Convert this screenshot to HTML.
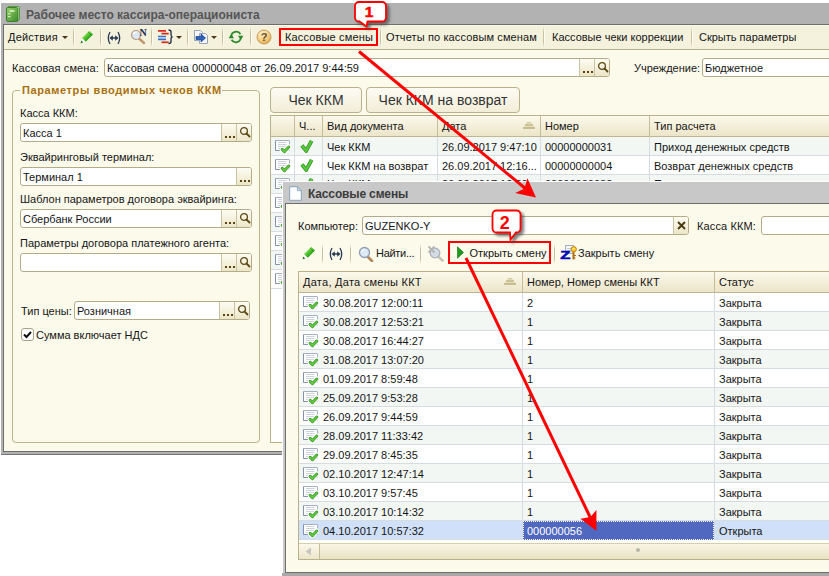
<!DOCTYPE html>
<html><head><meta charset="utf-8">
<style>
*{box-sizing:border-box;margin:0;padding:0}
html,body{width:829px;height:576px;overflow:hidden;background:#fff}
body{position:relative;font-family:"Liberation Sans",sans-serif;font-size:11px;color:#151515}
.abs{position:absolute}
.t{position:absolute;white-space:nowrap;line-height:14px;height:14px}
.win{position:absolute;background:#fcfaeb}
.inp{position:absolute;background:#fff;border:1px solid #b3ac86;border-radius:3px;height:19px}
.inp .v{position:absolute;left:2px;top:2px;line-height:14px;white-space:nowrap}
.btns{position:absolute;right:0;top:0;bottom:0;display:flex}
.sb{width:15px;height:17px;border-left:1px solid #c9c3a0;background:linear-gradient(#fdfcf3,#ece6c8);position:relative}
.sb:last-child{border-radius:0 2px 2px 0}
.dots{position:absolute;left:3px;top:12px;width:10px;height:2px;background:linear-gradient(90deg,#5a4510 0 2px,transparent 2px 4px,#5a4510 4px 6px,transparent 6px 8px,#5a4510 8px 10px)}
.sep{position:absolute;width:2px;background:linear-gradient(90deg,#c9c19a 0 1px,#fffef6 1px 2px);-webkit-mask-image:linear-gradient(transparent,#000 25%,#000 75%,transparent);mask-image:linear-gradient(transparent,#000 25%,#000 75%,transparent)}
.hdr{position:absolute;background:linear-gradient(#fbf9ec,#f4efda 50%,#ece5c9);border-right:1px solid #c5bd97;border-bottom:1px solid #bfb791;height:21px}
.hdr span{position:absolute;left:4px;top:3px;line-height:14px;white-space:nowrap}
.cell{position:absolute;white-space:nowrap;line-height:14px}

.bigbtn{border:1px solid #b9b18a;border-radius:4px;background:linear-gradient(#fdfcf4,#f2edd7);text-align:center}
.bigbtn span{font-size:14px;line-height:24px;color:#333}
.sort{position:absolute;top:6px;width:12px;height:8px;background:linear-gradient(#d2c9a0,#d2c9a0) 4px 0/4px 1px no-repeat,linear-gradient(#ccc296,#ccc296) 2px 2px/8px 2px no-repeat,linear-gradient(#c8bd8e,#c8bd8e) 0 5px/12px 2px no-repeat,linear-gradient(#e4ddbc,#e4ddbc) 3px 1px/6px 1px no-repeat,linear-gradient(#e4ddbc,#e4ddbc) 1px 4px/10px 1px no-repeat}
</style></head><body>

<!-- MAIN WINDOW -->
<div class="abs" style="left:1px;top:3px;width:840px;height:452px;background:#757575"></div><div class="abs" style="left:1px;top:3px;width:840px;height:451px;background:#b2b2b2"></div>
<div class="abs" style="left:3px;top:3px;width:840px;height:449px;background:#6e6e6e"></div>
<div class="win" id="w1" style="left:4px;top:25px;width:840px;height:426px"></div>
<div class="abs" style="left:3px;top:3px;width:830px;height:21px;background:#b2b2b2"></div>
<div class="t" style="left:26px;top:8px;font-weight:bold;font-size:12px;color:#555" id="title1">Рабочее место кассира-операциониста</div>
<!-- toolbar -->
<div class="abs" style="left:4px;top:25px;width:830px;height:24px;background:#f4f1dc;border-top:1px solid #faf8e8"></div>
<div class="abs" style="left:4px;top:49px;width:830px;height:1px;background:#b9b18a"></div>
<div class="t" style="left:8px;top:30px;letter-spacing:.2px" id="act">Действия</div>
<div class="t" style="left:285px;top:30px;letter-spacing:.15px" id="m1">Кассовые смены</div>
<div class="t" style="left:386px;top:30px;letter-spacing:.12px" id="m2">Отчеты по кассовым сменам</div>
<div class="t" style="left:552px;top:30px" id="m3">Кассовые чеки коррекции</div>
<div class="t" style="left:699px;top:30px" id="m4">Скрыть параметры</div>


<!-- toolbar1 icons -->
<svg class="abs" style="left:5px;top:6px" width="16" height="17" viewBox="0 0 16 17"><defs><linearGradient id="bk" x1="0" y1="0" x2="1" y2="1"><stop offset="0" stop-color="#9cd470"/><stop offset="1" stop-color="#3a8a26"/></linearGradient></defs><rect x="2.500" y="0.500" width="12" height="14" rx="1.500" fill="#d8ecc8" stroke="#5a9a44"/><rect x="1.500" y="1.500" width="11.500" height="14" rx="1.500" fill="url(#bk)" stroke="#3c8030"/><path d="M4.500 5h5" stroke="#eafbe0" stroke-width="1.400"/><path d="M3.200 7.800h2.300M3.200 10.600h2.300" stroke="#eafbe0" stroke-width="1"/></svg>
<svg class="abs" style="left:62px;top:36px" width="6" height="3"><path d="M0 0h6l-3 3z" fill="#4a3a1a"/></svg>
<div class="sep" style="left:73px;top:27px;height:20px"></div>
<svg class="abs" style="left:80px;top:30px" width="14" height="14" viewBox="0 0 14 14"><defs><linearGradient id="pg" x1="0" y1="0" x2="1" y2="1"><stop offset="0" stop-color="#1e7a10"/><stop offset=".3" stop-color="#86e058"/><stop offset=".55" stop-color="#3cb422"/><stop offset="1" stop-color="#1c7a0e"/></linearGradient></defs><path d="M0.600 13.200l1.400-5.200l3.800 3.800z" fill="#fff"/><path d="M0.600 13.200l0.700-2.600l1.900 1.900z" fill="#1e6a12"/><path d="M2 8l7.200-7.200l3.800 3.800l-7.200 7.200z" fill="url(#pg)"/><path d="M8 2l3.800 3.800" stroke="#1e7a10" stroke-width=".7" opacity=".7"/></svg>
<div class="sep" style="left:100px;top:27px;height:20px"></div>
<svg class="abs" style="left:106px;top:31px" width="16" height="14" viewBox="0 0 16 14"><path d="M4 1q-3.400 6 0 12M12 1q3.400 6 0 12" fill="none" stroke="#2a3c54" stroke-width="1.300"/><path d="M5 7h6" stroke="#2a3c54" stroke-width="1.500"/><path d="M6.800 4.200L3.400 7l3.400 2.800zM9.200 4.200L12.600 7l-3.400 2.800z" fill="#2a3c54"/></svg>
<svg class="abs" style="left:130px;top:28px" width="18" height="17" viewBox="0 0 18 17"><path d="M9 10.500l5 4.500" stroke="#c09870" stroke-width="2.400" stroke-linecap="round"/><circle cx="6" cy="7" r="4.500" fill="#dde8f6" stroke="#b89878" stroke-width="1.200"/><path d="M3.500 6a3 3 0 0 1 3-2" fill="none" stroke="#fff" stroke-width="1.200"/><text x="9.500" y="8" font-family="Liberation Serif,serif" font-weight="bold" font-size="10" fill="#1c2a50">N</text></svg>
<div class="sep" style="left:151px;top:27px;height:20px"></div>
<svg class="abs" style="left:157px;top:29px" width="17" height="16" viewBox="0 0 17 16"><path d="M1 1.800h8M4.500 4.700h7.200" stroke="#e02818" stroke-width="1.700"/><path d="M1 7.500h8M1 10.300h8" stroke="#2f72d0" stroke-width="1.700"/><path d="M4.500 13.300h7.200" stroke="#e02818" stroke-width="1.700"/><path d="M11.500 1q2.500 0 2.500 2v3q0 1.500 1.500 1.800q-1.500 0.300-1.500 1.800v3q0 2-2.500 2" fill="none" stroke="#1c2a44" stroke-width="1.300"/></svg>
<svg class="abs" style="left:176px;top:36px" width="6" height="3"><path d="M0 0h6l-3 3z" fill="#4a3a1a"/></svg>
<div class="sep" style="left:187px;top:27px;height:20px"></div>
<svg class="abs" style="left:193px;top:29px" width="16" height="16" viewBox="0 0 16 16"><path d="M1.500 1.500h6l2 2v8h-8z" fill="#f4f6fa" stroke="#9aa6b8"/><path d="M6.500 4.500h6l2 2v8h-8z" fill="#f4f6fa" stroke="#9aa6b8"/><path d="M3 7.500h5v-2.500l4.500 4l-4.500 4v-2.500h-5z" fill="#2a62bc" stroke="#173f86" stroke-width=".7"/></svg>
<svg class="abs" style="left:211px;top:36px" width="6" height="3"><path d="M0 0h6l-3 3z" fill="#4a3a1a"/></svg>
<div class="sep" style="left:222px;top:27px;height:20px"></div>
<svg class="abs" style="left:228px;top:29px" width="16" height="16" viewBox="0 0 16 16"><path d="M3.200 7.500a5 5 0 0 1 9.300-2.300" fill="none" stroke="#2a8a2a" stroke-width="1.700"/><path d="M0.600 9.200h5.400l-2.700-4.200z" fill="#2a8a2a"/><path d="M12.800 8.500a5 5 0 0 1-9.300 2.300" fill="none" stroke="#2a8a2a" stroke-width="1.700"/><path d="M10 6.800h5.400l-2.700 4.200z" fill="#2a8a2a"/></svg>
<div class="sep" style="left:250px;top:27px;height:20px"></div>
<svg class="abs" style="left:256px;top:29px" width="16" height="16" viewBox="0 0 16 16"><defs><radialGradient id="hg" cx=".4" cy=".3" r=".8"><stop offset="0" stop-color="#fff6dc"/><stop offset=".6" stop-color="#f3c878"/><stop offset="1" stop-color="#d89a40"/></radialGradient></defs><circle cx="8" cy="8" r="7" fill="url(#hg)" stroke="#c9a060" stroke-width="1"/><text x="8" y="12" text-anchor="middle" font-family="Liberation Sans,sans-serif" font-weight="bold" font-size="11" fill="#6a4a20">?</text></svg>
<div class="sep" style="left:380px;top:27px;height:20px"></div>
<div class="sep" style="left:543px;top:27px;height:20px"></div>
<div class="sep" style="left:691px;top:27px;height:20px"></div>
<div class="t" style="left:12px;top:61px;letter-spacing:.13px" id="l1">Кассовая смена:</div>
<div class="inp" style="left:104px;top:58px;width:506px"><span class="v">Кассовая смена 000000048 от 26.09.2017 9:44:59</span><div class="btns"><div class="sb"><i class="dots"></i></div><div class="sb"><svg class="abs" style="left:2px;top:2px" width="12" height="13" viewBox="0 0 12 13"><circle cx="5" cy="5" r="3.400" fill="none" stroke="#5c4a14" stroke-width="1.300"/><path d="M7.500 7.500l3 3" stroke="#5c4a14" stroke-width="1.800" stroke-linecap="round"/></svg></div></div></div>
<div class="t" style="left:634px;top:61px" id="l2">Учреждение:</div>
<div class="inp" style="left:702px;top:58px;width:140px"><span class="v">Бюджетное</span></div>

<!-- group -->
<div class="abs" style="left:12px;top:90px;width:248px;height:353px;border:1px solid #bdb48a;border-radius:4px"></div>
<div class="t" style="left:20px;top:83px;font-weight:bold;color:#a8700f;background:#fcfaeb;padding:0 0 0 2px;letter-spacing:.6px" id="gt">Параметры вводимых чеков ККМ</div>

<div class="t" style="left:20px;top:106px">Касса ККМ:</div>
<div class="inp" style="left:20px;top:123px;width:232px"><span class="v">Касса 1</span><div class="btns"><div class="sb"><i class="dots"></i></div><div class="sb"><svg class="abs" style="left:2px;top:2px" width="12" height="13" viewBox="0 0 12 13"><circle cx="5" cy="5" r="3.400" fill="none" stroke="#5c4a14" stroke-width="1.300"/><path d="M7.500 7.500l3 3" stroke="#5c4a14" stroke-width="1.800" stroke-linecap="round"/></svg></div></div></div>
<div class="t" style="left:20px;top:150px">Эквайринговый терминал:</div>
<div class="inp" style="left:20px;top:167px;width:232px"><span class="v">Терминал 1</span><div class="btns"><div class="sb"><i class="dots"></i></div></div></div>
<div class="t" style="left:20px;top:192px">Шаблон параметров договора эквайринга:</div>
<div class="inp" style="left:20px;top:209px;width:232px"><span class="v">Сбербанк России</span><div class="btns"><div class="sb"><i class="dots"></i></div><div class="sb"><svg class="abs" style="left:2px;top:2px" width="12" height="13" viewBox="0 0 12 13"><circle cx="5" cy="5" r="3.400" fill="none" stroke="#5c4a14" stroke-width="1.300"/><path d="M7.500 7.500l3 3" stroke="#5c4a14" stroke-width="1.800" stroke-linecap="round"/></svg></div></div></div>
<div class="t" style="left:20px;top:236px">Параметры договора платежного агента:</div>
<div class="inp" style="left:20px;top:253px;width:232px"><div class="btns"><div class="sb"><i class="dots"></i></div><div class="sb"><svg class="abs" style="left:2px;top:2px" width="12" height="13" viewBox="0 0 12 13"><circle cx="5" cy="5" r="3.400" fill="none" stroke="#5c4a14" stroke-width="1.300"/><path d="M7.500 7.500l3 3" stroke="#5c4a14" stroke-width="1.800" stroke-linecap="round"/></svg></div></div></div>
<div class="t" style="left:21px;top:304px">Тип цены:</div>
<div class="inp" style="left:74px;top:301px;width:176px"><span class="v">Розничная</span><div class="btns"><div class="sb"><i class="dots"></i></div><div class="sb"><svg class="abs" style="left:2px;top:2px" width="12" height="13" viewBox="0 0 12 13"><circle cx="5" cy="5" r="3.400" fill="none" stroke="#5c4a14" stroke-width="1.300"/><path d="M7.500 7.500l3 3" stroke="#5c4a14" stroke-width="1.800" stroke-linecap="round"/></svg></div></div></div>
<div class="abs" style="left:21px;top:328px;width:13px;height:13px;border:1px solid #a9a38a;border-radius:3px;background:#fff"></div><svg class="abs" style="left:23px;top:331px" width="9" height="8" viewBox="0 0 9 8"><path d="M1 3.500l2.500 2.500l4.500-5" fill="none" stroke="#111" stroke-width="2"/></svg>
<div class="t" style="left:36px;top:328px">Сумма включает НДС</div>



<!-- main buttons -->
<div class="abs bigbtn" style="left:270px;top:87px;width:92px;height:26px"><span>Чек ККМ</span></div>
<div class="abs bigbtn" style="left:366px;top:87px;width:154px;height:26px"><span>Чек ККМ на возврат</span></div>

<!-- main table -->
<div class="abs" style="left:270px;top:115px;width:570px;height:328px;background:#fff;border:1px solid #b9b18a"></div>
<div class="hdr" style="left:271px;top:116px;width:24px"></div>
<div class="hdr" style="left:295px;top:116px;width:28px"><span style="left:4px">Ч...</span></div>
<div class="hdr" style="left:323px;top:116px;width:115px"><span>Вид документа</span></div>
<div class="hdr" style="left:438px;top:116px;width:103px"><span>Дата</span><i class="sort" style="left:85px"></i></div>
<div class="hdr" style="left:541px;top:116px;width:109px"><span>Номер</span></div>
<div class="hdr" style="left:650px;top:116px;width:190px"><span>Тип расчета</span></div>
<div class="abs" style="left:271px;top:137px;width:570px;height:19px;background:#f2f7f4;border-bottom:1px solid #d5dde3"></div>
<div class="abs" style="left:294px;top:137px;width:1px;height:19px;background:#d5dde3"></div>
<div class="abs" style="left:322px;top:137px;width:1px;height:19px;background:#d5dde3"></div>
<div class="abs" style="left:437px;top:137px;width:1px;height:19px;background:#d5dde3"></div>
<div class="abs" style="left:540px;top:137px;width:1px;height:19px;background:#d5dde3"></div>
<div class="abs" style="left:649px;top:137px;width:1px;height:19px;background:#d5dde3"></div>
<svg class="abs" style="left:275px;top:140px" width="16" height="14" viewBox="0 0 16 14"><rect x="0.500" y="0.500" width="14" height="10" rx="0.500" fill="#fff" stroke="#a4b0c2"/><path d="M0.500 10.500v-10M0.500 10.500h7" stroke="#8392a8" fill="none"/><path d="M3 2.500h8.500M3 4.500h8.500M3 6.500h8M3 8.500h4" stroke="#ccd3de"/><path d="M7.200 9.400l2.300 2.200l4.300-4.600" fill="none" stroke="#fff" stroke-width="5" stroke-linecap="round" stroke-linejoin="round"/><path d="M7.200 9.400l2.300 2.200l4.300-4.600" fill="none" stroke="#3a9a24" stroke-width="3" stroke-linecap="round" stroke-linejoin="round"/><path d="M7.200 9.400l2.300 2.200l4.300-4.600" fill="none" stroke="#62c844" stroke-width="1.600" stroke-linecap="round" stroke-linejoin="round"/></svg><svg class="abs" style="left:300px;top:139px" width="14" height="14" viewBox="0 0 14 14"><path d="M1.800 6.500L6.200 11.800L11.600 1.800" fill="none" stroke="#2f8f1e" stroke-width="3.800" stroke-linejoin="miter"/><path d="M1.800 6.500L6.200 11.800L11.600 1.800" fill="none" stroke="#56c63c" stroke-width="2.400" stroke-linejoin="miter"/></svg><div class="cell" style="left:327px;top:140px">Чек ККМ</div><div class="cell" style="left:442px;top:140px">26.09.2017 9:47:10</div><div class="cell" style="left:545px;top:140px">00000000031</div><div class="cell" style="left:654px;top:140px">Приход денежных средств</div>
<div class="abs" style="left:271px;top:156px;width:570px;height:19px;background:#fff;border-bottom:1px solid #d5dde3"></div>
<div class="abs" style="left:294px;top:156px;width:1px;height:19px;background:#d5dde3"></div>
<div class="abs" style="left:322px;top:156px;width:1px;height:19px;background:#d5dde3"></div>
<div class="abs" style="left:437px;top:156px;width:1px;height:19px;background:#d5dde3"></div>
<div class="abs" style="left:540px;top:156px;width:1px;height:19px;background:#d5dde3"></div>
<div class="abs" style="left:649px;top:156px;width:1px;height:19px;background:#d5dde3"></div>
<svg class="abs" style="left:275px;top:159px" width="16" height="14" viewBox="0 0 16 14"><rect x="0.500" y="0.500" width="14" height="10" rx="0.500" fill="#fff" stroke="#a4b0c2"/><path d="M0.500 10.500v-10M0.500 10.500h7" stroke="#8392a8" fill="none"/><path d="M3 2.500h8.500M3 4.500h8.500M3 6.500h8M3 8.500h4" stroke="#ccd3de"/><path d="M7.200 9.400l2.300 2.200l4.300-4.600" fill="none" stroke="#fff" stroke-width="5" stroke-linecap="round" stroke-linejoin="round"/><path d="M7.200 9.400l2.300 2.200l4.300-4.600" fill="none" stroke="#3a9a24" stroke-width="3" stroke-linecap="round" stroke-linejoin="round"/><path d="M7.200 9.400l2.300 2.200l4.300-4.600" fill="none" stroke="#62c844" stroke-width="1.600" stroke-linecap="round" stroke-linejoin="round"/></svg><svg class="abs" style="left:300px;top:158px" width="14" height="14" viewBox="0 0 14 14"><path d="M1.800 6.500L6.200 11.800L11.600 1.800" fill="none" stroke="#2f8f1e" stroke-width="3.800" stroke-linejoin="miter"/><path d="M1.800 6.500L6.200 11.800L11.600 1.800" fill="none" stroke="#56c63c" stroke-width="2.400" stroke-linejoin="miter"/></svg><div class="cell" style="left:327px;top:159px">Чек ККМ на возврат</div><div class="cell" style="left:442px;top:159px">26.09.2017 12:16...</div><div class="cell" style="left:545px;top:159px">00000000004</div><div class="cell" style="left:654px;top:159px">Возврат денежных средств</div>
<div class="abs" style="left:271px;top:175px;width:570px;height:19px;background:#f2f7f4;border-bottom:1px solid #d5dde3"></div>
<div class="abs" style="left:294px;top:175px;width:1px;height:19px;background:#d5dde3"></div>
<div class="abs" style="left:322px;top:175px;width:1px;height:19px;background:#d5dde3"></div>
<div class="abs" style="left:437px;top:175px;width:1px;height:19px;background:#d5dde3"></div>
<div class="abs" style="left:540px;top:175px;width:1px;height:19px;background:#d5dde3"></div>
<div class="abs" style="left:649px;top:175px;width:1px;height:19px;background:#d5dde3"></div>
<svg class="abs" style="left:275px;top:178px" width="16" height="14" viewBox="0 0 16 14"><rect x="0.500" y="0.500" width="14" height="10" rx="0.500" fill="#fff" stroke="#a4b0c2"/><path d="M0.500 10.500v-10M0.500 10.500h7" stroke="#8392a8" fill="none"/><path d="M3 2.500h8.500M3 4.500h8.500M3 6.500h8M3 8.500h4" stroke="#ccd3de"/><path d="M7.200 9.400l2.300 2.200l4.300-4.600" fill="none" stroke="#fff" stroke-width="5" stroke-linecap="round" stroke-linejoin="round"/><path d="M7.200 9.400l2.300 2.200l4.300-4.600" fill="none" stroke="#3a9a24" stroke-width="3" stroke-linecap="round" stroke-linejoin="round"/><path d="M7.200 9.400l2.300 2.200l4.300-4.600" fill="none" stroke="#62c844" stroke-width="1.600" stroke-linecap="round" stroke-linejoin="round"/></svg><svg class="abs" style="left:300px;top:177px" width="14" height="14" viewBox="0 0 14 14"><path d="M1.800 6.500L6.200 11.800L11.600 1.800" fill="none" stroke="#2f8f1e" stroke-width="3.800" stroke-linejoin="miter"/><path d="M1.800 6.500L6.200 11.800L11.600 1.800" fill="none" stroke="#56c63c" stroke-width="2.400" stroke-linejoin="miter"/></svg><div class="cell" style="left:327px;top:177px">Чек ККМ</div><div class="cell" style="left:442px;top:177px">26.09.2017 12:20...</div><div class="cell" style="left:545px;top:177px">00000000032</div><div class="cell" style="left:654px;top:177px">Приход денежных средств</div>
<div class="abs" style="left:271px;top:194px;width:570px;height:19px;background:#fff;border-bottom:1px solid #d5dde3"></div>
<div class="abs" style="left:294px;top:194px;width:1px;height:19px;background:#d5dde3"></div>
<div class="abs" style="left:322px;top:194px;width:1px;height:19px;background:#d5dde3"></div>
<div class="abs" style="left:437px;top:194px;width:1px;height:19px;background:#d5dde3"></div>
<div class="abs" style="left:540px;top:194px;width:1px;height:19px;background:#d5dde3"></div>
<div class="abs" style="left:649px;top:194px;width:1px;height:19px;background:#d5dde3"></div>
<svg class="abs" style="left:275px;top:197px" width="16" height="14" viewBox="0 0 16 14"><rect x="0.500" y="0.500" width="14" height="10" rx="0.500" fill="#fff" stroke="#a4b0c2"/><path d="M0.500 10.500v-10M0.500 10.500h7" stroke="#8392a8" fill="none"/><path d="M3 2.500h8.500M3 4.500h8.500M3 6.500h8M3 8.500h4" stroke="#ccd3de"/><path d="M7.200 9.400l2.300 2.200l4.300-4.600" fill="none" stroke="#fff" stroke-width="5" stroke-linecap="round" stroke-linejoin="round"/><path d="M7.200 9.400l2.300 2.200l4.300-4.600" fill="none" stroke="#3a9a24" stroke-width="3" stroke-linecap="round" stroke-linejoin="round"/><path d="M7.200 9.400l2.300 2.200l4.300-4.600" fill="none" stroke="#62c844" stroke-width="1.600" stroke-linecap="round" stroke-linejoin="round"/></svg><div class="abs" style="left:271px;top:213px;width:570px;height:19px;background:#f2f7f4;border-bottom:1px solid #d5dde3"></div>
<div class="abs" style="left:294px;top:213px;width:1px;height:19px;background:#d5dde3"></div>
<div class="abs" style="left:322px;top:213px;width:1px;height:19px;background:#d5dde3"></div>
<div class="abs" style="left:437px;top:213px;width:1px;height:19px;background:#d5dde3"></div>
<div class="abs" style="left:540px;top:213px;width:1px;height:19px;background:#d5dde3"></div>
<div class="abs" style="left:649px;top:213px;width:1px;height:19px;background:#d5dde3"></div>
<svg class="abs" style="left:275px;top:216px" width="16" height="14" viewBox="0 0 16 14"><rect x="0.500" y="0.500" width="14" height="10" rx="0.500" fill="#fff" stroke="#a4b0c2"/><path d="M0.500 10.500v-10M0.500 10.500h7" stroke="#8392a8" fill="none"/><path d="M3 2.500h8.500M3 4.500h8.500M3 6.500h8M3 8.500h4" stroke="#ccd3de"/><path d="M7.200 9.400l2.300 2.200l4.300-4.600" fill="none" stroke="#fff" stroke-width="5" stroke-linecap="round" stroke-linejoin="round"/><path d="M7.200 9.400l2.300 2.200l4.300-4.600" fill="none" stroke="#3a9a24" stroke-width="3" stroke-linecap="round" stroke-linejoin="round"/><path d="M7.200 9.400l2.300 2.200l4.300-4.600" fill="none" stroke="#62c844" stroke-width="1.600" stroke-linecap="round" stroke-linejoin="round"/></svg><div class="abs" style="left:271px;top:232px;width:570px;height:19px;background:#fff;border-bottom:1px solid #d5dde3"></div>
<div class="abs" style="left:294px;top:232px;width:1px;height:19px;background:#d5dde3"></div>
<div class="abs" style="left:322px;top:232px;width:1px;height:19px;background:#d5dde3"></div>
<div class="abs" style="left:437px;top:232px;width:1px;height:19px;background:#d5dde3"></div>
<div class="abs" style="left:540px;top:232px;width:1px;height:19px;background:#d5dde3"></div>
<div class="abs" style="left:649px;top:232px;width:1px;height:19px;background:#d5dde3"></div>
<svg class="abs" style="left:275px;top:235px" width="16" height="14" viewBox="0 0 16 14"><rect x="0.500" y="0.500" width="14" height="10" rx="0.500" fill="#fff" stroke="#a4b0c2"/><path d="M0.500 10.500v-10M0.500 10.500h7" stroke="#8392a8" fill="none"/><path d="M3 2.500h8.500M3 4.500h8.500M3 6.500h8M3 8.500h4" stroke="#ccd3de"/><path d="M7.200 9.400l2.300 2.200l4.300-4.600" fill="none" stroke="#fff" stroke-width="5" stroke-linecap="round" stroke-linejoin="round"/><path d="M7.200 9.400l2.300 2.200l4.300-4.600" fill="none" stroke="#3a9a24" stroke-width="3" stroke-linecap="round" stroke-linejoin="round"/><path d="M7.200 9.400l2.300 2.200l4.300-4.600" fill="none" stroke="#62c844" stroke-width="1.600" stroke-linecap="round" stroke-linejoin="round"/></svg><div class="abs" style="left:271px;top:251px;width:570px;height:19px;background:#f2f7f4;border-bottom:1px solid #d5dde3"></div>
<div class="abs" style="left:294px;top:251px;width:1px;height:19px;background:#d5dde3"></div>
<div class="abs" style="left:322px;top:251px;width:1px;height:19px;background:#d5dde3"></div>
<div class="abs" style="left:437px;top:251px;width:1px;height:19px;background:#d5dde3"></div>
<div class="abs" style="left:540px;top:251px;width:1px;height:19px;background:#d5dde3"></div>
<div class="abs" style="left:649px;top:251px;width:1px;height:19px;background:#d5dde3"></div>
<svg class="abs" style="left:275px;top:254px" width="16" height="14" viewBox="0 0 16 14"><rect x="0.500" y="0.500" width="14" height="10" rx="0.500" fill="#fff" stroke="#a4b0c2"/><path d="M0.500 10.500v-10M0.500 10.500h7" stroke="#8392a8" fill="none"/><path d="M3 2.500h8.500M3 4.500h8.500M3 6.500h8M3 8.500h4" stroke="#ccd3de"/><path d="M7.200 9.400l2.300 2.200l4.300-4.600" fill="none" stroke="#fff" stroke-width="5" stroke-linecap="round" stroke-linejoin="round"/><path d="M7.200 9.400l2.300 2.200l4.300-4.600" fill="none" stroke="#3a9a24" stroke-width="3" stroke-linecap="round" stroke-linejoin="round"/><path d="M7.200 9.400l2.300 2.200l4.300-4.600" fill="none" stroke="#62c844" stroke-width="1.600" stroke-linecap="round" stroke-linejoin="round"/></svg><div class="abs" style="left:271px;top:270px;width:570px;height:19px;background:#fff;border-bottom:1px solid #d5dde3"></div>
<div class="abs" style="left:294px;top:270px;width:1px;height:19px;background:#d5dde3"></div>
<div class="abs" style="left:322px;top:270px;width:1px;height:19px;background:#d5dde3"></div>
<div class="abs" style="left:437px;top:270px;width:1px;height:19px;background:#d5dde3"></div>
<div class="abs" style="left:540px;top:270px;width:1px;height:19px;background:#d5dde3"></div>
<div class="abs" style="left:649px;top:270px;width:1px;height:19px;background:#d5dde3"></div>
<svg class="abs" style="left:275px;top:273px" width="16" height="14" viewBox="0 0 16 14"><rect x="0.500" y="0.500" width="14" height="10" rx="0.500" fill="#fff" stroke="#a4b0c2"/><path d="M0.500 10.500v-10M0.500 10.500h7" stroke="#8392a8" fill="none"/><path d="M3 2.500h8.500M3 4.500h8.500M3 6.500h8M3 8.500h4" stroke="#ccd3de"/><path d="M7.200 9.400l2.300 2.200l4.300-4.600" fill="none" stroke="#fff" stroke-width="5" stroke-linecap="round" stroke-linejoin="round"/><path d="M7.200 9.400l2.300 2.200l4.300-4.600" fill="none" stroke="#3a9a24" stroke-width="3" stroke-linecap="round" stroke-linejoin="round"/><path d="M7.200 9.400l2.300 2.200l4.300-4.600" fill="none" stroke="#62c844" stroke-width="1.600" stroke-linecap="round" stroke-linejoin="round"/></svg>
<!-- WINDOW 2 -->
<div class="abs" style="left:282px;top:181px;width:560px;height:395px;background:#fff"></div><div class="abs" style="left:283px;top:182px;width:560px;height:394px;background:#c8c8c8"></div>
<div class="abs" style="left:282px;top:573px;width:560px;height:3px;background:#a8a8a8"></div><div class="abs" style="left:285px;top:182px;width:560px;height:391px;background:#6e6e6e"></div>
<div class="abs" style="left:283px;top:182px;width:560px;height:21px;background:#c8c8c8"></div>
<div class="abs" style="left:286px;top:204px;width:560px;height:368px;background:#fcfaeb"></div>
<svg class="abs" style="left:289px;top:186px" width="13" height="15" viewBox="0 0 13 15"><path d="M0.700 0.700h7.600l4 4v9.600h-11.600z" fill="#fdfeff" stroke="#8ba3bc" stroke-width="1"/><path d="M8.300 0.700v4h4z" fill="#d0dcea" stroke="#8ba3bc" stroke-width=".8"/></svg>
<div class="t" style="left:308px;top:187px;font-weight:bold;font-size:12px;color:#3c3c3c;letter-spacing:-.15px" id="title2">Кассовые смены</div>

<div class="t" style="left:298px;top:219px" id="l3">Компьютер:</div>
<div class="inp" style="left:362px;top:216px;width:327px"><span class="v">GUZENKO-Y</span><div class="btns"><div class="sb"><svg class="abs" style="left:3px;top:4px" width="9" height="9" viewBox="0 0 9 9"><path d="M1 1l7 7M8 1l-7 7" stroke="#4a3a10" stroke-width="1.9"/></svg></div></div></div>
<div class="t" style="left:697px;top:219px;letter-spacing:.13px" id="l4">Касса ККМ:</div>
<div class="inp" style="left:761px;top:216px;width:90px"></div>

<!-- toolbar2 -->
<div class="sep" style="left:322px;top:244px;height:20px"></div>

<div class="sep" style="left:350px;top:244px;height:20px"></div>
<div class="t" style="left:376px;top:246px;letter-spacing:-.3px" id="find">Найти...</div>
<div class="sep" style="left:420px;top:244px;height:20px"></div>
<div class="t" style="left:469.500px;top:246px" id="open">Открыть смену</div>
<div class="sep" style="left:554px;top:244px;height:20px"></div>
<div class="t" style="left:578px;top:246px" id="close">Закрыть смену</div>


<svg class="abs" style="left:302px;top:246px" width="14" height="14" viewBox="0 0 14 14"><defs><linearGradient id="pg2" x1="0" y1="0" x2="1" y2="1"><stop offset="0" stop-color="#1e7a10"/><stop offset=".3" stop-color="#86e058"/><stop offset=".55" stop-color="#3cb422"/><stop offset="1" stop-color="#1c7a0e"/></linearGradient></defs><path d="M0.600 13.200l1.400-5.200l3.800 3.800z" fill="#fff"/><path d="M0.600 13.200l0.700-2.600l1.900 1.900z" fill="#1e6a12"/><path d="M2 8l7.200-7.200l3.800 3.800l-7.200 7.200z" fill="url(#pg2)"/><path d="M8 2l3.800 3.800" stroke="#1e7a10" stroke-width=".7" opacity=".7"/></svg>
<svg class="abs" style="left:328px;top:247px" width="16" height="14" viewBox="0 0 16 14"><path d="M4 1q-3.400 6 0 12M12 1q3.400 6 0 12" fill="none" stroke="#2a3c54" stroke-width="1.300"/><path d="M5 7h6" stroke="#2a3c54" stroke-width="1.500"/><path d="M6.800 4.200L3.400 7l3.400 2.800zM9.200 4.200L12.600 7l-3.400 2.800z" fill="#2a3c54"/></svg>
<svg class="abs" style="left:358px;top:246px" width="16" height="16" viewBox="0 0 16 16"><path d="M9 10l5 5" stroke="#b08858" stroke-width="2.600" stroke-linecap="round"/><circle cx="6.500" cy="6.500" r="5" fill="#dfeaf8" stroke="#8f9db3" stroke-width="1.300"/><path d="M3.500 6a3 3 0 0 1 3-2.500" fill="none" stroke="#fff" stroke-width="1.200"/></svg>
<svg class="abs" style="left:427px;top:245px" width="18" height="17" viewBox="0 0 18 17"><path d="M10 10.500l5.500 5" stroke="#c8c4b8" stroke-width="2.600" stroke-linecap="round"/><circle cx="8" cy="8" r="4.800" fill="#d4dae4" stroke="#aab0bc" stroke-width="1.300"/><path d="M1.500 1.500l6 6M7.500 1.500l-6 6" stroke="#b4b4b4" stroke-width="1.800"/></svg>
<svg class="abs" style="left:457px;top:246px" width="8" height="13" viewBox="0 0 8 13"><path d="M0.500 0.800v11.400l6-5.700z" fill="#1e9a1e" stroke="#0f6e0f" stroke-width=".6"/></svg>
<svg class="abs" style="left:560px;top:244px" width="18" height="17" viewBox="0 0 18 17"><rect x="5.500" y="1.500" width="8" height="8" fill="#f6f8fb" stroke="#a4aebc"/><path d="M7 4.500h5M7 6.500h5" stroke="#c0c8d4"/><text transform="translate(0.300,15.300) scale(1.450,1)" font-family="Liberation Sans,sans-serif" font-weight="bold" font-size="11.500" fill="#0808b8" stroke="#0808b8" stroke-width=".5">Z</text><path d="M13.500 7.500v8" stroke="#b06c10" stroke-width="2"/><path d="M13.500 11.500h2.500M13.500 14h2" stroke="#b06c10" stroke-width="1.200"/><circle cx="13.700" cy="5.300" r="2.700" fill="#ffc828" stroke="#b87810" stroke-width=".9"/><circle cx="13.700" cy="4.600" r=".8" fill="#fff3c0"/></svg>
<!-- table2 -->
<div class="abs" style="left:298px;top:271px;width:560px;height:289px;background:#fff;border:1px solid #b9b18a"></div>
<div class="hdr" style="left:299px;top:272px;width:224px"><span style="letter-spacing:.26px">Дата, Дата смены ККТ</span><i class="sort" style="left:205px"></i></div>
<div class="hdr" style="left:523px;top:272px;width:192px"><span>Номер, Номер смены ККТ</span></div>
<div class="hdr" style="left:715px;top:272px;width:140px"><span>Статус</span></div>
<div class="abs" style="left:299px;top:293px;width:560px;height:19px;background:#fff;border-bottom:1px solid #d5dde3"></div><div class="abs" style="left:522px;top:293px;width:1px;height:19px;background:#d5dde3"></div><div class="abs" style="left:714px;top:293px;width:1px;height:19px;background:#d5dde3"></div><svg class="abs" style="left:303px;top:296px" width="16" height="14" viewBox="0 0 16 14"><rect x="0.500" y="0.500" width="14" height="10" rx="0.500" fill="#fff" stroke="#a4b0c2"/><path d="M0.500 10.500v-10M0.500 10.500h7" stroke="#8392a8" fill="none"/><path d="M3 2.500h8.500M3 4.500h8.500M3 6.500h8M3 8.500h4" stroke="#ccd3de"/><path d="M7.200 9.400l2.300 2.200l4.300-4.600" fill="none" stroke="#fff" stroke-width="5" stroke-linecap="round" stroke-linejoin="round"/><path d="M7.200 9.400l2.300 2.200l4.300-4.600" fill="none" stroke="#3a9a24" stroke-width="3" stroke-linecap="round" stroke-linejoin="round"/><path d="M7.200 9.400l2.300 2.200l4.300-4.600" fill="none" stroke="#62c844" stroke-width="1.600" stroke-linecap="round" stroke-linejoin="round"/></svg><div class="cell" style="left:323px;top:296px">30.08.2017 12:00:11</div><div class="cell" style="left:527px;top:296px;">2</div><div class="cell" style="left:719px;top:296px">Закрыта</div>
<div class="abs" style="left:299px;top:312px;width:560px;height:19px;background:#f2f7f4;border-bottom:1px solid #d5dde3"></div><div class="abs" style="left:522px;top:312px;width:1px;height:19px;background:#d5dde3"></div><div class="abs" style="left:714px;top:312px;width:1px;height:19px;background:#d5dde3"></div><svg class="abs" style="left:303px;top:315px" width="16" height="14" viewBox="0 0 16 14"><rect x="0.500" y="0.500" width="14" height="10" rx="0.500" fill="#fff" stroke="#a4b0c2"/><path d="M0.500 10.500v-10M0.500 10.500h7" stroke="#8392a8" fill="none"/><path d="M3 2.500h8.500M3 4.500h8.500M3 6.500h8M3 8.500h4" stroke="#ccd3de"/><path d="M7.200 9.400l2.300 2.200l4.300-4.600" fill="none" stroke="#fff" stroke-width="5" stroke-linecap="round" stroke-linejoin="round"/><path d="M7.200 9.400l2.300 2.200l4.300-4.600" fill="none" stroke="#3a9a24" stroke-width="3" stroke-linecap="round" stroke-linejoin="round"/><path d="M7.200 9.400l2.300 2.200l4.300-4.600" fill="none" stroke="#62c844" stroke-width="1.600" stroke-linecap="round" stroke-linejoin="round"/></svg><div class="cell" style="left:323px;top:315px">30.08.2017 12:53:21</div><div class="cell" style="left:527px;top:315px;">1</div><div class="cell" style="left:719px;top:315px">Закрыта</div>
<div class="abs" style="left:299px;top:331px;width:560px;height:19px;background:#fff;border-bottom:1px solid #d5dde3"></div><div class="abs" style="left:522px;top:331px;width:1px;height:19px;background:#d5dde3"></div><div class="abs" style="left:714px;top:331px;width:1px;height:19px;background:#d5dde3"></div><svg class="abs" style="left:303px;top:334px" width="16" height="14" viewBox="0 0 16 14"><rect x="0.500" y="0.500" width="14" height="10" rx="0.500" fill="#fff" stroke="#a4b0c2"/><path d="M0.500 10.500v-10M0.500 10.500h7" stroke="#8392a8" fill="none"/><path d="M3 2.500h8.500M3 4.500h8.500M3 6.500h8M3 8.500h4" stroke="#ccd3de"/><path d="M7.200 9.400l2.300 2.200l4.300-4.600" fill="none" stroke="#fff" stroke-width="5" stroke-linecap="round" stroke-linejoin="round"/><path d="M7.200 9.400l2.300 2.200l4.300-4.600" fill="none" stroke="#3a9a24" stroke-width="3" stroke-linecap="round" stroke-linejoin="round"/><path d="M7.200 9.400l2.300 2.200l4.300-4.600" fill="none" stroke="#62c844" stroke-width="1.600" stroke-linecap="round" stroke-linejoin="round"/></svg><div class="cell" style="left:323px;top:334px">30.08.2017 16:44:27</div><div class="cell" style="left:527px;top:334px;">1</div><div class="cell" style="left:719px;top:334px">Закрыта</div>
<div class="abs" style="left:299px;top:350px;width:560px;height:19px;background:#f2f7f4;border-bottom:1px solid #d5dde3"></div><div class="abs" style="left:522px;top:350px;width:1px;height:19px;background:#d5dde3"></div><div class="abs" style="left:714px;top:350px;width:1px;height:19px;background:#d5dde3"></div><svg class="abs" style="left:303px;top:353px" width="16" height="14" viewBox="0 0 16 14"><rect x="0.500" y="0.500" width="14" height="10" rx="0.500" fill="#fff" stroke="#a4b0c2"/><path d="M0.500 10.500v-10M0.500 10.500h7" stroke="#8392a8" fill="none"/><path d="M3 2.500h8.500M3 4.500h8.500M3 6.500h8M3 8.500h4" stroke="#ccd3de"/><path d="M7.200 9.400l2.300 2.200l4.300-4.600" fill="none" stroke="#fff" stroke-width="5" stroke-linecap="round" stroke-linejoin="round"/><path d="M7.200 9.400l2.300 2.200l4.300-4.600" fill="none" stroke="#3a9a24" stroke-width="3" stroke-linecap="round" stroke-linejoin="round"/><path d="M7.200 9.400l2.300 2.200l4.300-4.600" fill="none" stroke="#62c844" stroke-width="1.600" stroke-linecap="round" stroke-linejoin="round"/></svg><div class="cell" style="left:323px;top:353px">31.08.2017 13:07:20</div><div class="cell" style="left:527px;top:353px;">1</div><div class="cell" style="left:719px;top:353px">Закрыта</div>
<div class="abs" style="left:299px;top:369px;width:560px;height:19px;background:#fff;border-bottom:1px solid #d5dde3"></div><div class="abs" style="left:522px;top:369px;width:1px;height:19px;background:#d5dde3"></div><div class="abs" style="left:714px;top:369px;width:1px;height:19px;background:#d5dde3"></div><svg class="abs" style="left:303px;top:372px" width="16" height="14" viewBox="0 0 16 14"><rect x="0.500" y="0.500" width="14" height="10" rx="0.500" fill="#fff" stroke="#a4b0c2"/><path d="M0.500 10.500v-10M0.500 10.500h7" stroke="#8392a8" fill="none"/><path d="M3 2.500h8.500M3 4.500h8.500M3 6.500h8M3 8.500h4" stroke="#ccd3de"/><path d="M7.200 9.400l2.300 2.200l4.300-4.600" fill="none" stroke="#fff" stroke-width="5" stroke-linecap="round" stroke-linejoin="round"/><path d="M7.200 9.400l2.300 2.200l4.300-4.600" fill="none" stroke="#3a9a24" stroke-width="3" stroke-linecap="round" stroke-linejoin="round"/><path d="M7.200 9.400l2.300 2.200l4.300-4.600" fill="none" stroke="#62c844" stroke-width="1.600" stroke-linecap="round" stroke-linejoin="round"/></svg><div class="cell" style="left:323px;top:372px">01.09.2017 8:59:48</div><div class="cell" style="left:527px;top:372px;">1</div><div class="cell" style="left:719px;top:372px">Закрыта</div>
<div class="abs" style="left:299px;top:388px;width:560px;height:19px;background:#f2f7f4;border-bottom:1px solid #d5dde3"></div><div class="abs" style="left:522px;top:388px;width:1px;height:19px;background:#d5dde3"></div><div class="abs" style="left:714px;top:388px;width:1px;height:19px;background:#d5dde3"></div><svg class="abs" style="left:303px;top:391px" width="16" height="14" viewBox="0 0 16 14"><rect x="0.500" y="0.500" width="14" height="10" rx="0.500" fill="#fff" stroke="#a4b0c2"/><path d="M0.500 10.500v-10M0.500 10.500h7" stroke="#8392a8" fill="none"/><path d="M3 2.500h8.500M3 4.500h8.500M3 6.500h8M3 8.500h4" stroke="#ccd3de"/><path d="M7.200 9.400l2.300 2.200l4.300-4.600" fill="none" stroke="#fff" stroke-width="5" stroke-linecap="round" stroke-linejoin="round"/><path d="M7.200 9.400l2.300 2.200l4.300-4.600" fill="none" stroke="#3a9a24" stroke-width="3" stroke-linecap="round" stroke-linejoin="round"/><path d="M7.200 9.400l2.300 2.200l4.300-4.600" fill="none" stroke="#62c844" stroke-width="1.600" stroke-linecap="round" stroke-linejoin="round"/></svg><div class="cell" style="left:323px;top:391px">25.09.2017 9:53:28</div><div class="cell" style="left:527px;top:391px;">1</div><div class="cell" style="left:719px;top:391px">Закрыта</div>
<div class="abs" style="left:299px;top:407px;width:560px;height:19px;background:#fff;border-bottom:1px solid #d5dde3"></div><div class="abs" style="left:522px;top:407px;width:1px;height:19px;background:#d5dde3"></div><div class="abs" style="left:714px;top:407px;width:1px;height:19px;background:#d5dde3"></div><svg class="abs" style="left:303px;top:410px" width="16" height="14" viewBox="0 0 16 14"><rect x="0.500" y="0.500" width="14" height="10" rx="0.500" fill="#fff" stroke="#a4b0c2"/><path d="M0.500 10.500v-10M0.500 10.500h7" stroke="#8392a8" fill="none"/><path d="M3 2.500h8.500M3 4.500h8.500M3 6.500h8M3 8.500h4" stroke="#ccd3de"/><path d="M7.200 9.400l2.300 2.200l4.300-4.600" fill="none" stroke="#fff" stroke-width="5" stroke-linecap="round" stroke-linejoin="round"/><path d="M7.200 9.400l2.300 2.200l4.300-4.600" fill="none" stroke="#3a9a24" stroke-width="3" stroke-linecap="round" stroke-linejoin="round"/><path d="M7.200 9.400l2.300 2.200l4.300-4.600" fill="none" stroke="#62c844" stroke-width="1.600" stroke-linecap="round" stroke-linejoin="round"/></svg><div class="cell" style="left:323px;top:410px">26.09.2017 9:44:59</div><div class="cell" style="left:527px;top:410px;">1</div><div class="cell" style="left:719px;top:410px">Закрыта</div>
<div class="abs" style="left:299px;top:426px;width:560px;height:19px;background:#f2f7f4;border-bottom:1px solid #d5dde3"></div><div class="abs" style="left:522px;top:426px;width:1px;height:19px;background:#d5dde3"></div><div class="abs" style="left:714px;top:426px;width:1px;height:19px;background:#d5dde3"></div><svg class="abs" style="left:303px;top:429px" width="16" height="14" viewBox="0 0 16 14"><rect x="0.500" y="0.500" width="14" height="10" rx="0.500" fill="#fff" stroke="#a4b0c2"/><path d="M0.500 10.500v-10M0.500 10.500h7" stroke="#8392a8" fill="none"/><path d="M3 2.500h8.500M3 4.500h8.500M3 6.500h8M3 8.500h4" stroke="#ccd3de"/><path d="M7.200 9.400l2.300 2.200l4.300-4.600" fill="none" stroke="#fff" stroke-width="5" stroke-linecap="round" stroke-linejoin="round"/><path d="M7.200 9.400l2.300 2.200l4.300-4.600" fill="none" stroke="#3a9a24" stroke-width="3" stroke-linecap="round" stroke-linejoin="round"/><path d="M7.200 9.400l2.300 2.200l4.300-4.600" fill="none" stroke="#62c844" stroke-width="1.600" stroke-linecap="round" stroke-linejoin="round"/></svg><div class="cell" style="left:323px;top:429px">28.09.2017 11:33:42</div><div class="cell" style="left:527px;top:429px;">1</div><div class="cell" style="left:719px;top:429px">Закрыта</div>
<div class="abs" style="left:299px;top:445px;width:560px;height:19px;background:#fff;border-bottom:1px solid #d5dde3"></div><div class="abs" style="left:522px;top:445px;width:1px;height:19px;background:#d5dde3"></div><div class="abs" style="left:714px;top:445px;width:1px;height:19px;background:#d5dde3"></div><svg class="abs" style="left:303px;top:448px" width="16" height="14" viewBox="0 0 16 14"><rect x="0.500" y="0.500" width="14" height="10" rx="0.500" fill="#fff" stroke="#a4b0c2"/><path d="M0.500 10.500v-10M0.500 10.500h7" stroke="#8392a8" fill="none"/><path d="M3 2.500h8.500M3 4.500h8.500M3 6.500h8M3 8.500h4" stroke="#ccd3de"/><path d="M7.200 9.400l2.300 2.200l4.300-4.600" fill="none" stroke="#fff" stroke-width="5" stroke-linecap="round" stroke-linejoin="round"/><path d="M7.200 9.400l2.300 2.200l4.300-4.600" fill="none" stroke="#3a9a24" stroke-width="3" stroke-linecap="round" stroke-linejoin="round"/><path d="M7.200 9.400l2.300 2.200l4.300-4.600" fill="none" stroke="#62c844" stroke-width="1.600" stroke-linecap="round" stroke-linejoin="round"/></svg><div class="cell" style="left:323px;top:448px">29.09.2017 8:45:35</div><div class="cell" style="left:527px;top:448px;">1</div><div class="cell" style="left:719px;top:448px">Закрыта</div>
<div class="abs" style="left:299px;top:464px;width:560px;height:19px;background:#f2f7f4;border-bottom:1px solid #d5dde3"></div><div class="abs" style="left:522px;top:464px;width:1px;height:19px;background:#d5dde3"></div><div class="abs" style="left:714px;top:464px;width:1px;height:19px;background:#d5dde3"></div><svg class="abs" style="left:303px;top:467px" width="16" height="14" viewBox="0 0 16 14"><rect x="0.500" y="0.500" width="14" height="10" rx="0.500" fill="#fff" stroke="#a4b0c2"/><path d="M0.500 10.500v-10M0.500 10.500h7" stroke="#8392a8" fill="none"/><path d="M3 2.500h8.500M3 4.500h8.500M3 6.500h8M3 8.500h4" stroke="#ccd3de"/><path d="M7.200 9.400l2.300 2.200l4.300-4.600" fill="none" stroke="#fff" stroke-width="5" stroke-linecap="round" stroke-linejoin="round"/><path d="M7.200 9.400l2.300 2.200l4.300-4.600" fill="none" stroke="#3a9a24" stroke-width="3" stroke-linecap="round" stroke-linejoin="round"/><path d="M7.200 9.400l2.300 2.200l4.300-4.600" fill="none" stroke="#62c844" stroke-width="1.600" stroke-linecap="round" stroke-linejoin="round"/></svg><div class="cell" style="left:323px;top:467px">02.10.2017 12:47:14</div><div class="cell" style="left:527px;top:467px;">1</div><div class="cell" style="left:719px;top:467px">Закрыта</div>
<div class="abs" style="left:299px;top:483px;width:560px;height:19px;background:#fff;border-bottom:1px solid #d5dde3"></div><div class="abs" style="left:522px;top:483px;width:1px;height:19px;background:#d5dde3"></div><div class="abs" style="left:714px;top:483px;width:1px;height:19px;background:#d5dde3"></div><svg class="abs" style="left:303px;top:486px" width="16" height="14" viewBox="0 0 16 14"><rect x="0.500" y="0.500" width="14" height="10" rx="0.500" fill="#fff" stroke="#a4b0c2"/><path d="M0.500 10.500v-10M0.500 10.500h7" stroke="#8392a8" fill="none"/><path d="M3 2.500h8.500M3 4.500h8.500M3 6.500h8M3 8.500h4" stroke="#ccd3de"/><path d="M7.200 9.400l2.300 2.200l4.300-4.600" fill="none" stroke="#fff" stroke-width="5" stroke-linecap="round" stroke-linejoin="round"/><path d="M7.200 9.400l2.300 2.200l4.300-4.600" fill="none" stroke="#3a9a24" stroke-width="3" stroke-linecap="round" stroke-linejoin="round"/><path d="M7.200 9.400l2.300 2.200l4.300-4.600" fill="none" stroke="#62c844" stroke-width="1.600" stroke-linecap="round" stroke-linejoin="round"/></svg><div class="cell" style="left:323px;top:486px">03.10.2017 9:57:45</div><div class="cell" style="left:527px;top:486px;">1</div><div class="cell" style="left:719px;top:486px">Закрыта</div>
<div class="abs" style="left:299px;top:502px;width:560px;height:19px;background:#f2f7f4;border-bottom:1px solid #d5dde3"></div><div class="abs" style="left:522px;top:502px;width:1px;height:19px;background:#d5dde3"></div><div class="abs" style="left:714px;top:502px;width:1px;height:19px;background:#d5dde3"></div><svg class="abs" style="left:303px;top:505px" width="16" height="14" viewBox="0 0 16 14"><rect x="0.500" y="0.500" width="14" height="10" rx="0.500" fill="#fff" stroke="#a4b0c2"/><path d="M0.500 10.500v-10M0.500 10.500h7" stroke="#8392a8" fill="none"/><path d="M3 2.500h8.500M3 4.500h8.500M3 6.500h8M3 8.500h4" stroke="#ccd3de"/><path d="M7.200 9.400l2.300 2.200l4.300-4.600" fill="none" stroke="#fff" stroke-width="5" stroke-linecap="round" stroke-linejoin="round"/><path d="M7.200 9.400l2.300 2.200l4.300-4.600" fill="none" stroke="#3a9a24" stroke-width="3" stroke-linecap="round" stroke-linejoin="round"/><path d="M7.200 9.400l2.300 2.200l4.300-4.600" fill="none" stroke="#62c844" stroke-width="1.600" stroke-linecap="round" stroke-linejoin="round"/></svg><div class="cell" style="left:323px;top:505px">03.10.2017 10:14:32</div><div class="cell" style="left:527px;top:505px;">1</div><div class="cell" style="left:719px;top:505px">Закрыта</div>
<div class="abs" style="left:299px;top:521px;width:560px;height:19px;background:#cfe0f8;border-bottom:1px solid #d5dde3"></div><div class="abs" style="left:522px;top:521px;width:1px;height:19px;background:#d5dde3"></div><div class="abs" style="left:714px;top:521px;width:1px;height:19px;background:#d5dde3"></div><div class="abs" style="left:523px;top:521px;width:191px;height:19px;background:#5068c0;outline:1px dotted #fff;outline-offset:-1px"></div><svg class="abs" style="left:303px;top:524px" width="16" height="14" viewBox="0 0 16 14"><rect x="0.500" y="0.500" width="14" height="10" rx="0.500" fill="#fff" stroke="#a4b0c2"/><path d="M0.500 10.500v-10M0.500 10.500h7" stroke="#8392a8" fill="none"/><path d="M3 2.500h8.500M3 4.500h8.500M3 6.500h8M3 8.500h4" stroke="#ccd3de"/><path d="M7.200 9.400l2.300 2.200l4.300-4.600" fill="none" stroke="#fff" stroke-width="5" stroke-linecap="round" stroke-linejoin="round"/><path d="M7.200 9.400l2.300 2.200l4.300-4.600" fill="none" stroke="#3a9a24" stroke-width="3" stroke-linecap="round" stroke-linejoin="round"/><path d="M7.200 9.400l2.300 2.200l4.300-4.600" fill="none" stroke="#62c844" stroke-width="1.600" stroke-linecap="round" stroke-linejoin="round"/></svg><div class="cell" style="left:323px;top:524px">04.10.2017 10:57:32</div><div class="cell" style="left:527px;top:524px;color:#fff">000000056</div><div class="cell" style="left:719px;top:524px">Открыта</div>

<div class="abs" style="left:299px;top:543px;width:560px;height:16px;background:linear-gradient(#f8f5e4,#e9e2c4);border-top:1px solid #d6cfae"></div>
<div class="abs" style="left:299px;top:543px;width:21px;height:16px;background:linear-gradient(#faf8ea,#ece6ca);border-right:1px solid #c5bd97;border-top:1px solid #d6cfae"></div>
<svg class="abs" style="left:305px;top:547px" width="7" height="9"><path d="M6 0.500v8L0.500 4.500z" fill="#c6c6c2"/></svg>
<div class="abs" style="left:636px;top:548px;width:4px;height:4px;border-radius:50%;background:#b8b8a8"></div>

<!-- annotations -->
<svg class="abs" style="left:0;top:0" width="829" height="576" viewBox="0 0 829 576">
<defs><filter id="sh" x="-20%" y="-20%" width="150%" height="160%"><feGaussianBlur stdDeviation="1.400"/></filter></defs>
<rect x="280" y="29" width="97" height="16" fill="none" stroke="#f00" stroke-width="2"/>
<rect x="449" y="242" width="101" height="21" fill="none" stroke="#f00" stroke-width="2"/>
<path d="M359 2h23a4 4 0 0 1 4 4v11.500a4 4 0 0 1-4 4h-14.500l-1 5l-7-5h-0.500a4 4 0 0 1-4-4v-11.500a4 4 0 0 1 4-4z" transform="translate(2.500,2.500)" fill="#444" stroke="#444" stroke-width="2" opacity=".7" filter="url(#sh)"/>
<path d="M359 2h23a4 4 0 0 1 4 4v11.500a4 4 0 0 1-4 4h-14.500l-1 5l-7-5h-0.500a4 4 0 0 1-4-4v-11.500a4 4 0 0 1 4-4z" fill="#fff" stroke="#f00" stroke-width="1.800"/>
<text x="369" y="16.800" text-anchor="middle" font-family="Liberation Sans,sans-serif" font-weight="bold" font-size="15.500" fill="#f00" stroke="#f00" stroke-width=".5">1</text>
<path d="M496.500 210.500h20a4 4 0 0 1 4 4v14a4 4 0 0 1-4 4h-0.500l-5.500 7l-0.500-7h-13.500a4 4 0 0 1-4-4v-14a4 4 0 0 1 4-4z" transform="translate(2.500,2.500)" fill="#444" stroke="#444" stroke-width="2" opacity=".7" filter="url(#sh)"/>
<path d="M496.500 210.500h20a4 4 0 0 1 4 4v14a4 4 0 0 1-4 4h-0.500l-5.500 7l-0.500-7h-13.500a4 4 0 0 1-4-4v-14a4 4 0 0 1 4-4z" fill="#fff" stroke="#f00" stroke-width="1.800"/>
<text x="504.800" y="228.500" text-anchor="middle" font-family="Liberation Sans,sans-serif" font-weight="bold" font-size="18" fill="#f00">2</text>
<line x1="359" y1="51.500" x2="526" y2="189" stroke="#f00" stroke-width="3"/>
<path d="M536 197.600L527.400 178.200L524.500 188.500L515.200 193.100z" fill="#f00"/>
<line x1="466" y1="258" x2="591" y2="519" stroke="#f00" stroke-width="3"/>
<path d="M596.400 530.700L596.400 510.100L590.500 517L580.400 518.800z" fill="#f00"/>
</svg>

</body></html>
